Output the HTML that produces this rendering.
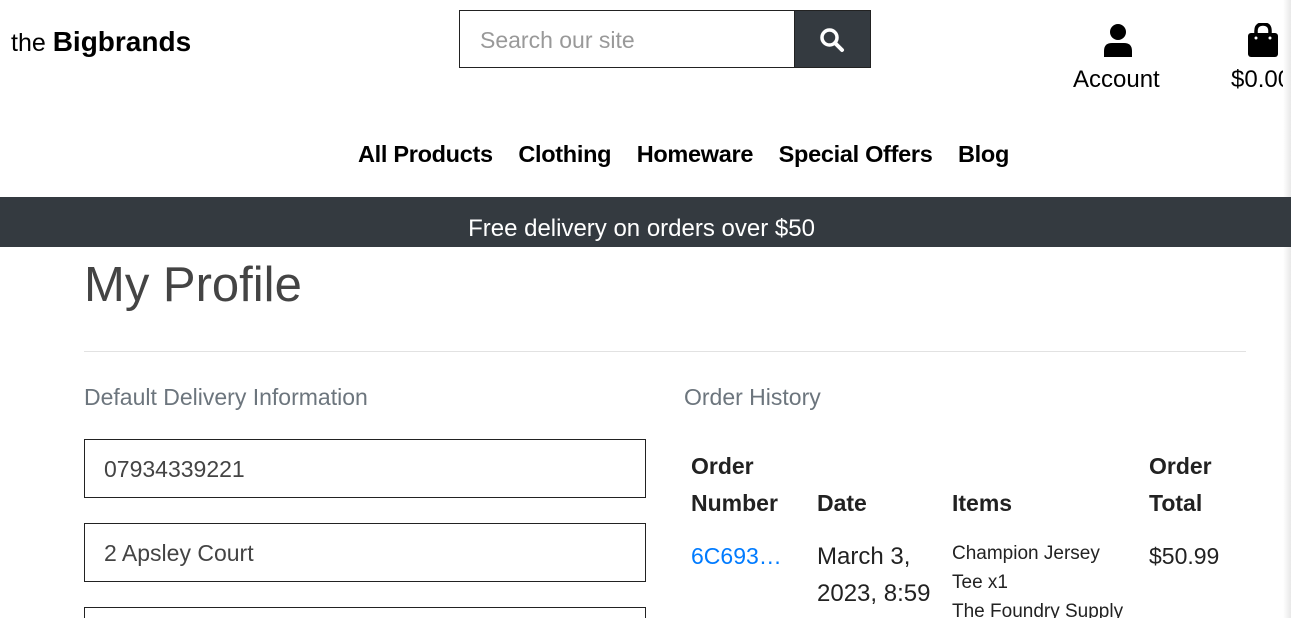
<!DOCTYPE html>
<html style="width:1291px;height:618px;overflow:hidden"><head><style>
*{margin:0;padding:0;box-sizing:border-box}
body{width:1291px;height:618px;overflow:hidden;background:#fff;font-family:"Liberation Sans",sans-serif;color:#000;position:relative}
.a{position:absolute;white-space:nowrap}
.inp{position:absolute;left:84px;width:562px;height:59px;border:1px solid #222;font-size:23px;color:#444;padding:16px 0 0 19px}
.th{font-weight:bold;font-size:23px;color:#222;line-height:37px}
</style></head><body>
<div class="a" style="left:11px;top:26px;font-size:25px">the <b style="font-size:28px">Bigbrands</b></div>
<div class="a" style="left:459px;top:10px;width:337px;height:58px;border:1px solid #222;font-size:23px;color:#999;padding:16px 0 0 20px">Search our site</div>
<div class="a" style="left:794px;top:10px;width:77px;height:58px;background:#343a40;border:1px solid #222"></div>
<svg class="a" style="left:819px;top:27px" width="26" height="26" viewBox="0 0 26 26"><circle cx="10.5" cy="10.5" r="7.5" fill="none" stroke="#fff" stroke-width="3.5"/><line x1="16" y1="16" x2="23" y2="23" stroke="#fff" stroke-width="4" stroke-linecap="round"/></svg>
<svg class="a" style="left:1103px;top:23px" width="30" height="34" viewBox="0 0 30 34"><circle cx="15" cy="9" r="8" fill="#000"/><path d="M1 34 V28 Q1 20 9 20 H21 Q29 20 29 28 V34Z" fill="#000"/></svg>
<div class="a" style="left:1073px;top:66px;font-size:24px">Account</div>
<svg class="a" style="left:1247px;top:23px" width="32" height="34" viewBox="0 0 32 34"><path d="M9 12 V8 Q9 1 16 1 Q23 1 23 8 V12" fill="none" stroke="#000" stroke-width="3.5"/><rect x="1" y="10" width="30" height="24" rx="3" fill="#000"/><circle cx="9" cy="15" r="1.5" fill="#fff"/><circle cx="23" cy="15" r="1.5" fill="#fff"/></svg>
<div class="a" style="left:1231px;top:66px;font-size:24px">$0.00</div>
<div class="a" style="left:1283px;top:0;width:8px;height:618px;background:linear-gradient(90deg,#fff,#e8e8e8)"></div>
<div class="a" style="left:358px;top:141px;font-size:23.5px;font-weight:bold;letter-spacing:-0.3px"><span style="margin-right:25.5px">All Products</span><span style="margin-right:25.5px">Clothing</span><span style="margin-right:25.5px">Homeware</span><span style="margin-right:25.5px">Special Offers</span><span>Blog</span></div>
<div class="a" style="left:0;top:197px;width:1291px;height:50px;background:#343a40;color:#fff;font-size:24px;text-align:center;padding-top:18px;padding-right:8px">Free delivery on orders over $50</div>
<div class="a" style="left:84px;top:257px;font-size:49px;color:#444">My Profile</div>
<div class="a" style="left:84px;top:351px;width:1162px;height:1px;background:#e2e2e2"></div>
<div class="a" style="left:84px;top:384px;font-size:23px;color:#6c757d">Default Delivery Information</div>
<div class="a" style="left:684px;top:384px;font-size:23px;color:#6c757d">Order History</div>
<div class="inp" style="top:439px">07934339221</div>
<div class="inp" style="top:523px">2 Apsley Court</div>
<div class="inp" style="top:607px;height:11px;border-bottom:none"></div>
<div class="a th" style="left:691px;top:448px">Order<br>Number</div>
<div class="a th" style="left:817px;top:485px">Date</div>
<div class="a th" style="left:952px;top:485px">Items</div>
<div class="a th" style="left:1149px;top:448px">Order<br>Total</div>
<div class="a" style="left:691px;top:543px;font-size:23px;color:#007bff">6C693…</div>
<div class="a" style="left:817px;top:538px;font-size:24px;color:#222;line-height:37px">March 3,<br>2023, 8:59</div>
<div class="a" style="left:952px;top:539px;font-size:19px;color:#222;line-height:29px;height:79px;overflow:hidden">Champion Jersey<br>Tee x1<br>The Foundry Supply</div>
<div class="a" style="left:1149px;top:543px;font-size:23px;color:#222">$50.99</div>
</body></html>
